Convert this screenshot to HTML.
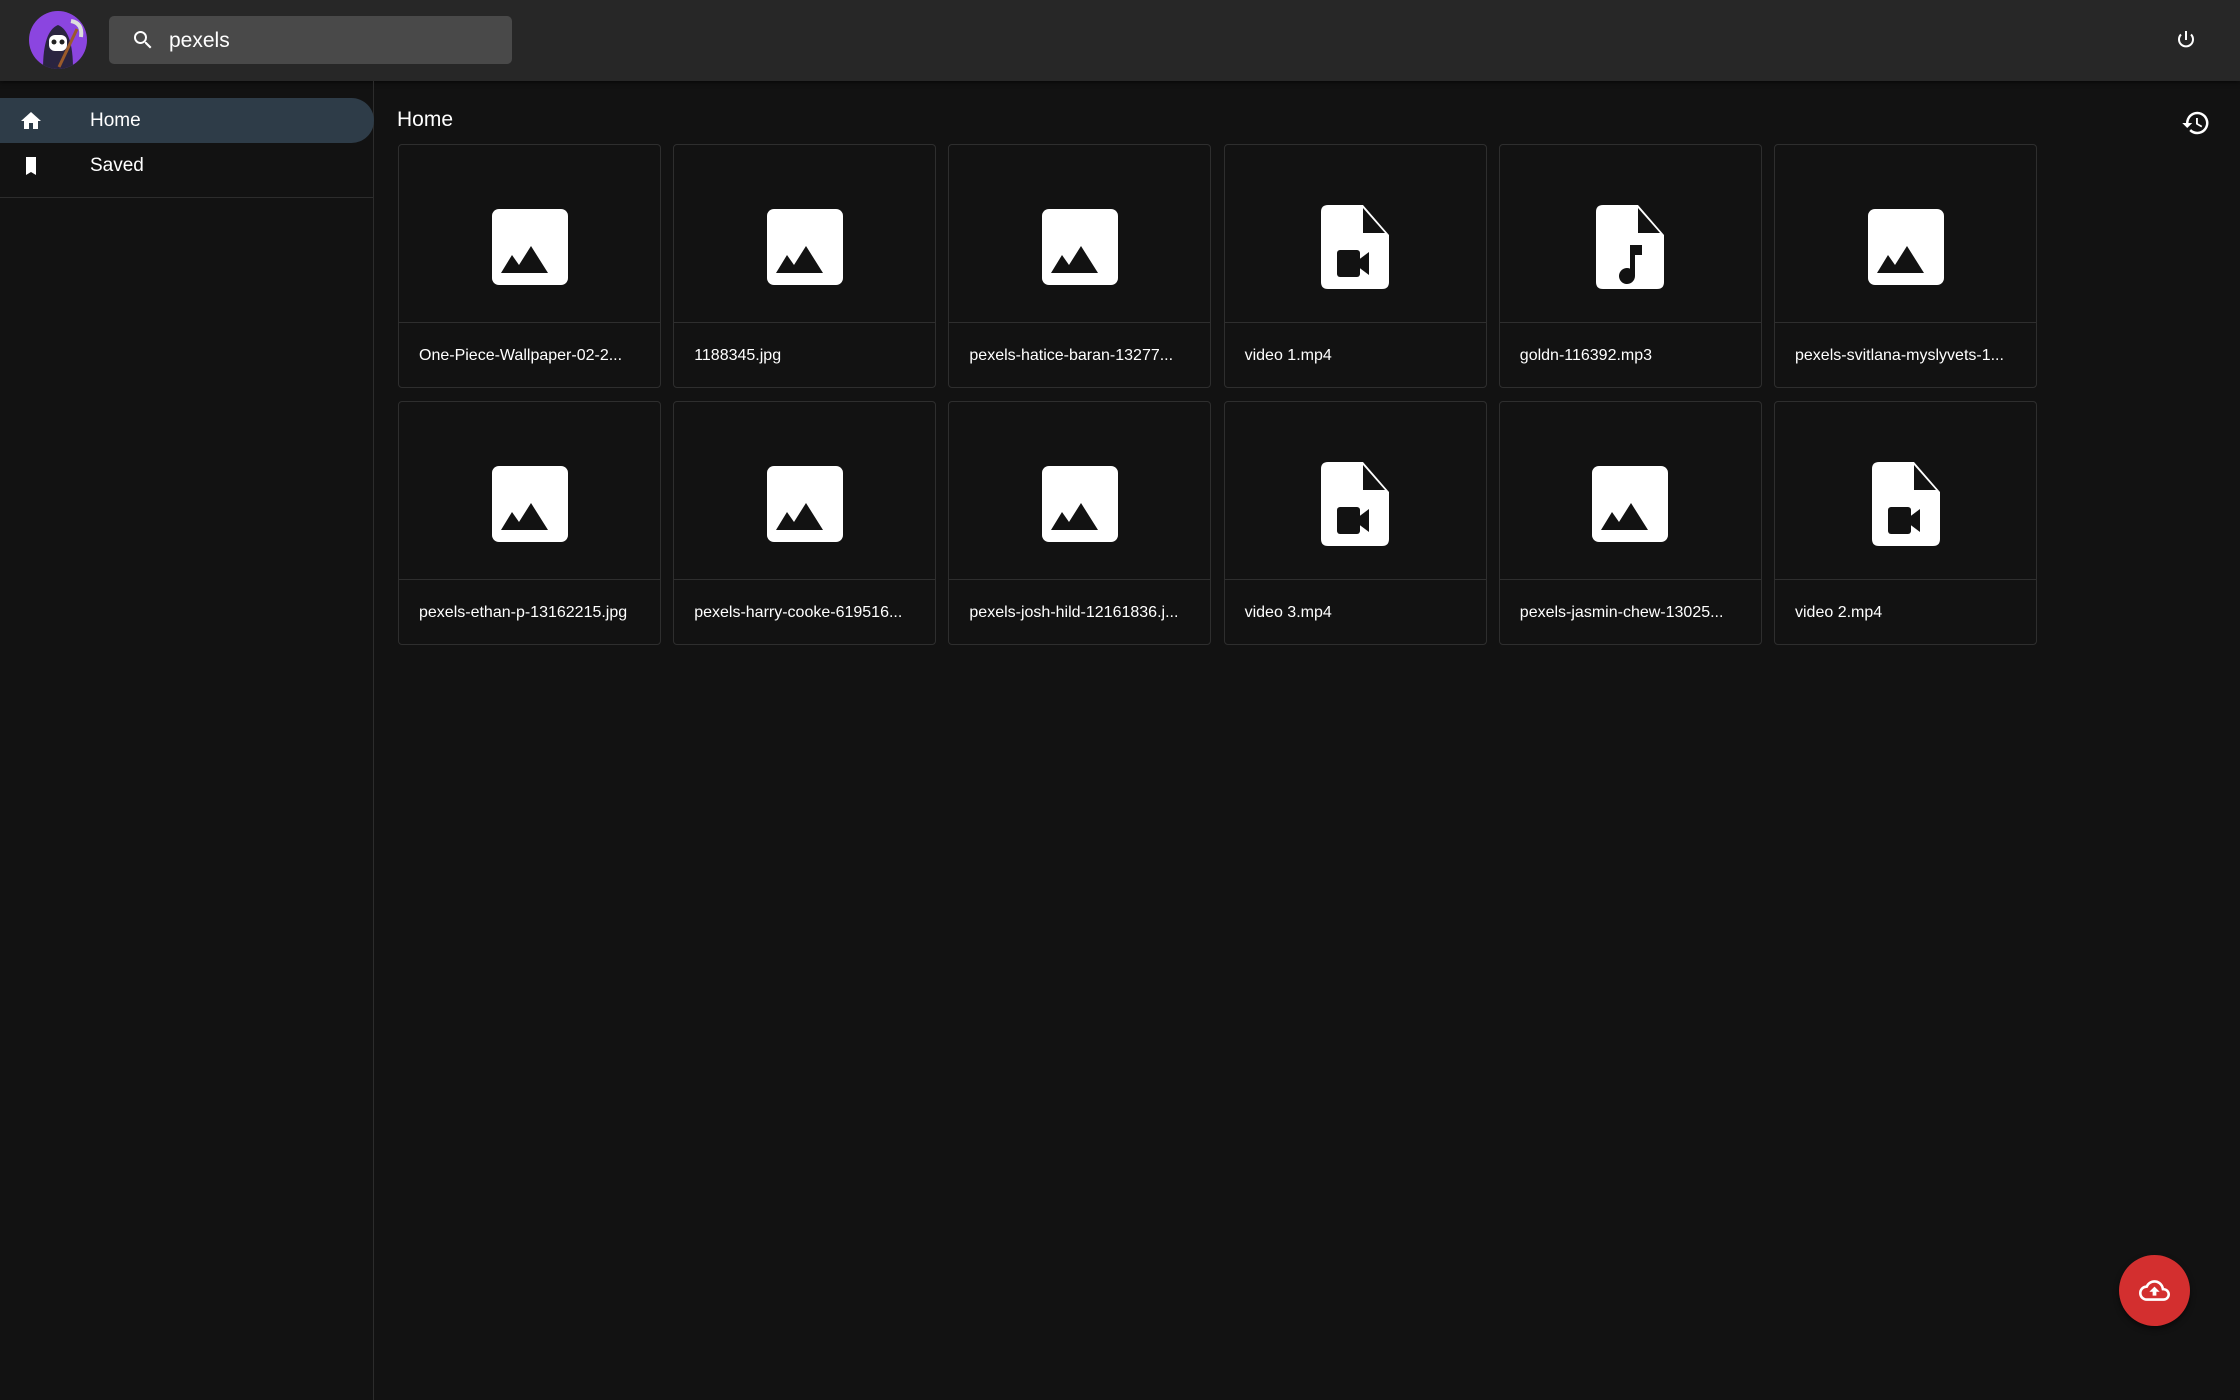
<!DOCTYPE html>
<html><head><meta charset="utf-8"><style>
*{margin:0;padding:0;box-sizing:border-box}
body{width:2240px;height:1400px;background:#121212;font-family:"Liberation Sans",Arial,sans-serif;color:#fff;position:relative;overflow:hidden}
.hdr{position:absolute;left:0;top:0;width:2240px;height:81px;background:#272727;box-shadow:0 2px 4px rgba(0,0,0,.5)}
.av{position:absolute;left:29px;top:11px;width:58px;height:58px;border-radius:50%;background:#8b45e0;overflow:hidden}
.search{position:absolute;left:109px;top:16px;width:403px;height:48px;background:#494949;border-radius:5px}
.search span{position:absolute;left:60px;top:13px;font-size:21px}
.side{position:absolute;left:0;top:81px;width:374px;height:1319px;border-right:1px solid #2c2c2c}
.nav{position:absolute;left:0;width:374px;height:45px;font-size:19px}
.nav.act{background:#2e3c48;border-radius:0 23px 23px 0}
.nav span{position:absolute;left:90px;top:12px}
.nav svg{position:absolute;left:19px;top:11px}
.div{position:absolute;left:0;top:116px;width:374px;height:1px;background:#2c2c2c}
.title{position:absolute;left:397px;top:108px;font-size:21px}
.card{position:absolute;width:263px;height:244px;border:1px solid #2e2e2e;border-radius:4px}
.card .line{position:absolute;left:0;top:177px;width:100%;height:1px;background:#2e2e2e}
.card .lbl{position:absolute;left:20px;top:202px;font-size:16px;white-space:nowrap}
.card svg{position:absolute;left:50%;top:102px;transform:translate(-50%,-50%)}
.fab{position:absolute;left:2119px;top:1255px;width:71px;height:71px;border-radius:50%;background:#d32f2f;box-shadow:0 3px 6px rgba(0,0,0,.5)}
</style></head><body>
<div class="hdr">
 <div class="av"><svg width="58" height="58" viewBox="0 0 58 58">
  <path d="M14 58 Q14 20 29 14 Q44 20 44 58Z" fill="#2a2440"/>
  <rect x="20" y="24" width="18" height="16" rx="6" fill="#fff"/>
  <circle cx="25" cy="31" r="2.5" fill="#222"/><circle cx="33" cy="31" r="2.5" fill="#222"/>
  <path d="M42 10 Q54 12 52 26" stroke="#ddd" stroke-width="4" fill="none"/>
  <line x1="48" y1="18" x2="30" y2="56" stroke="#9a5a2a" stroke-width="3"/>
 </svg></div>
 <div class="search">
  <svg style="position:absolute;left:22px;top:12px" width="24" height="24" viewBox="0 0 24 24"><path fill="#fff" d="M15.5 14h-.79l-.28-.27A6.47 6.47 0 0 0 16 9.5 6.5 6.5 0 1 0 9.5 16c1.61 0 3.09-.59 4.230-1.57l.27.28v.79l5 4.99L20.49 19l-4.99-5zm-6 0C7.01 14 5 11.99 5 9.5S7.01 5 9.5 5 14 7.01 14 9.5 11.99 14 9.5 14z"/></svg>
  <span>pexels</span></div>
 <svg style="position:absolute;left:2174px;top:28px" width="24" height="24" viewBox="0 0 24 24"><path fill="none" stroke="#fff" stroke-width="2" d="M12 3v9M7 6.5a7 7 0 1 0 10 0"/></svg>
</div>
<div class="side">
 <div class="nav act" style="top:17px"><svg width="24" height="24" viewBox="0 0 24 24"><path fill="#fff" d="M10 20v-6h4v6h5v-8h3L12 3 2 12h3v8z"/></svg><span>Home</span></div>
 <div class="nav" style="top:62px"><svg width="24" height="24" viewBox="0 0 24 24"><path fill="#fff" d="M17 3H7v18l5-3 5 3z"/></svg><span>Saved</span></div>
 <div class="div"></div>
</div>
<div class="title">Home</div>
<svg style="position:absolute;left:2181px;top:108px" width="30" height="30" viewBox="0 0 24 24"><path fill="#fff" d="M13 3a9 9 0 0 0-9 9H1l3.89 3.89.07.14L9 12H6c0-3.87 3.130-7 7-7s7 3.13 7 7-3.13 7-7 7c-1.93 0-3.68-.79-4.94-2.06l-1.42 1.42A8.95 8.95 0 0 0 13 21a9 9 0 0 0 0-18zm-1 5v5l4.28 2.54.72-1.21-3.5-2.08V8H12z"/></svg>

<div id="g"></div>
<div class="fab"><svg style="position:absolute;left:20px;top:20px" width="31" height="31" viewBox="0 0 24 24"><path fill="#fff" d="M19.35 10.04A7.49 7.49 0 0 0 12 4C9.11 4 6.6 5.64 5.35 8.04A5.994 5.994 0 0 0 0 14c0 3.31 2.69 6 6 6h13c2.76 0 5-2.24 5-5 0-2.64-2.05-4.78-4.65-4.96zM19 18H6c-2.21 0-4-1.79-4-4 0-2.05 1.53-3.76 3.56-3.97l1.07-.11.5-.95A5.47 5.47 0 0 1 12 6c2.62 0 4.88 1.86 5.39 4.43l.3 1.5 1.53.11A2.98 2.98 0 0 1 22 15c0 1.65-1.35 3-3 3zM8 13h2.55v3h2.9v-3H16l-4-4z"/></svg></div>
<script>
var img='<svg width="76" height="76" viewBox="0 0 76 76"><rect width="76" height="76" rx="7" fill="#fff"/><path d="M9 64 L20 46 L27 56 L39 37 L56 64Z" fill="#121212"/></svg>';
var vid='<svg width="68" height="84" viewBox="0 0 68 84"><path d="M7 0H42L68 30V77Q68 84 61 84H7Q0 84 0 77V7Q0 0 7 0Z" fill="#fff"/><path d="M42 3V28H64Z" fill="#121212"/><rect x="16" y="45" width="23" height="27" rx="3" fill="#121212"/><path d="M36 56l12-9v23l-12-9z" fill="#121212"/></svg>';
var aud='<svg width="68" height="84" viewBox="0 0 68 84"><path d="M7 0H42L68 30V77Q68 84 61 84H7Q0 84 0 77V7Q0 0 7 0Z" fill="#fff"/><path d="M42 3V28H64Z" fill="#121212"/><path d="M34 40h12v10h-7v21a8 8 0 1 1-5-7.4z" fill="#121212"/></svg>';
var items=[[img,"One-Piece-Wallpaper-02-2..."],[img,"1188345.jpg"],[img,"pexels-hatice-baran-13277..."],[vid,"video 1.mp4"],[aud,"goldn-116392.mp3"],[img,"pexels-svitlana-myslyvets-1..."],
[img,"pexels-ethan-p-13162215.jpg"],[img,"pexels-harry-cooke-619516..."],[img,"pexels-josh-hild-12161836.j..."],[vid,"video 3.mp4"],[img,"pexels-jasmin-chew-13025..."],[vid,"video 2.mp4"]];
var h='';items.forEach(function(it,i){var c=i%6,r=Math.floor(i/6);
h+='<div class="card" style="left:'+(398+c*275.2)+'px;top:'+(144+r*257)+'px">'+it[0]+'<div class="line"></div><div class="lbl">'+it[1]+'</div></div>';});
document.getElementById('g').innerHTML=h;
</script>
</body></html>
